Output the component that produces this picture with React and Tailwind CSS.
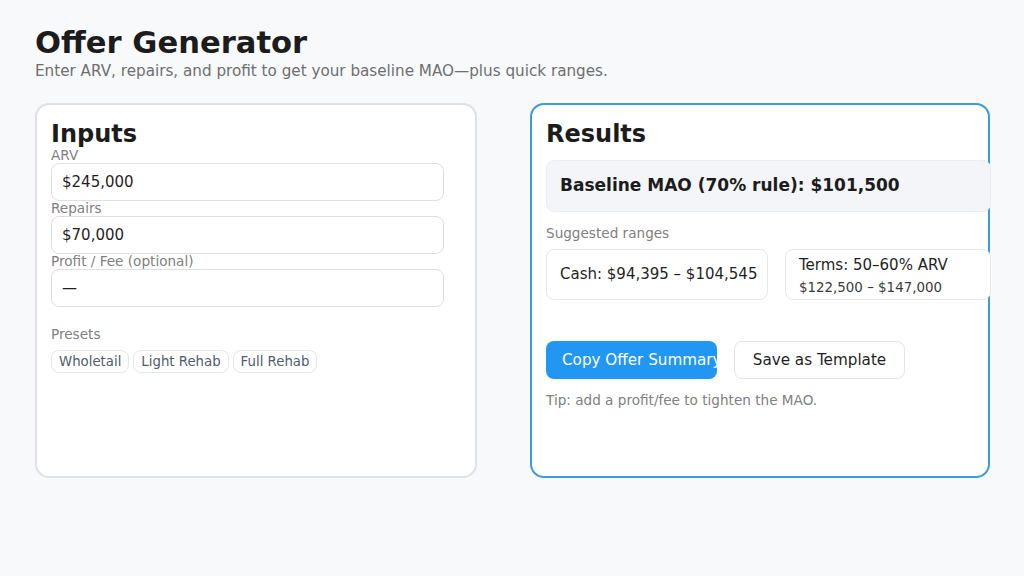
const Field = ({ label, value }) => (
  <div className="flex flex-col">
    <div className="text-[13.6px] leading-[15px] text-[#808080]">{label}</div>
    <div className="w-[393px] h-[38px] rounded-[8px] border border-[#dcdfe3] bg-white flex items-center px-[10px] text-[15px] text-[#1f1f1f]">
      {value}
    </div>
  </div>
)

const Chip = ({ children }) => (
  <div className="h-[23px] px-[7px] rounded-[8px] border border-[#e4e7eb] flex items-center text-[13.3px] text-[#4f5b6e]">
    {children}
  </div>
)

export default function App() {
  return (
    <div className="min-h-[576px] bg-[#f7f9fb] pt-[25px] pl-[35px] pr-[34px] font-['DejaVu_Sans',sans-serif] text-[#1f1f1f]">
      <h1 className="text-[30.6px] leading-[36px] font-bold text-[#1c1c1c]">Offer Generator</h1>
      <p className="mt-[1px] text-[15.2px] leading-[18px] text-[#6f6f6f]">
        Enter ARV, repairs, and profit to get your baseline MAO—plus quick ranges.
      </p>

      <div className="mt-[23px] flex gap-[53px]">
        <div className="w-[442px] h-[375px] shrink-0 rounded-[14px] border-2 border-[#dde1e6] bg-white px-[14px] pt-[15px]">
          <h2 className="text-[24px] leading-[28px] font-bold text-[#1c1c1c]">Inputs</h2>
          <Field label="ARV" value="$245,000" />
          <Field label="Repairs" value="$70,000" />
          <Field label="Profit / Fee (optional)" value="—" />
          <div className="mt-[20px] text-[13.6px] leading-[15px] text-[#808080]">Presets</div>
          <div className="mt-[8px] flex gap-[4px]">
            <Chip>Wholetail</Chip>
            <Chip>Light Rehab</Chip>
            <Chip>Full Rehab</Chip>
          </div>
        </div>

        <div className="w-[460px] h-[375px] shrink-0 rounded-[14px] border-2 border-[#3d9ade] bg-white px-[14px] pt-[15px]">
          <h2 className="text-[24px] leading-[28px] font-bold text-[#1c1c1c]">Results</h2>
          <div className="relative mt-[12px] w-[445px] h-[52px] rounded-[8px] border border-[#eceef1] bg-[#f3f5f8] flex items-center px-[13px] text-[17px] font-bold text-[#1c1c1c] whitespace-nowrap">
            Baseline MAO (70% rule): $101,500
          </div>
          <div className="mt-[14px] text-[13.6px] leading-[15px] text-[#808080]">Suggested ranges</div>
          <div className="mt-[8px] flex gap-[17px]">
            <div className="w-[222px] h-[51px] shrink-0 rounded-[8px] border border-[#e4e7eb] bg-white flex items-center px-[13px] text-[15px] text-[#1f1f1f] whitespace-nowrap">
              Cash: $94,395 – $104,545
            </div>
            <div className="relative w-[206px] h-[51px] shrink-0 rounded-[8px] border border-[#e4e7eb] bg-white flex flex-col pt-[6px] px-[13px] whitespace-nowrap">
              <div className="text-[15px] leading-[18px] text-[#1f1f1f]">Terms: 50–60% ARV</div>
              <div className="mt-[6px] text-[13.4px] leading-[16px] text-[#3a3a3a]">$122,500 – $147,000</div>
            </div>
          </div>
          <div className="mt-[41px] flex gap-[17px]">
            <div className="w-[171px] h-[38px] rounded-[8px] bg-[#2196f3] overflow-hidden flex items-center pl-[16px] text-[15.2px] text-white whitespace-nowrap">
              Copy Offer Summary
            </div>
            <div className="w-[171px] h-[38px] rounded-[8px] border border-[#e1e4e8] bg-white flex items-center justify-center text-[15.2px] text-[#1f1f1f] whitespace-nowrap">
              Save as Template
            </div>
          </div>
          <div className="mt-[14px] text-[13.6px] leading-[15px] text-[#808080]">Tip: add a profit/fee to tighten the MAO.</div>
        </div>
      </div>
    </div>
  )
}
